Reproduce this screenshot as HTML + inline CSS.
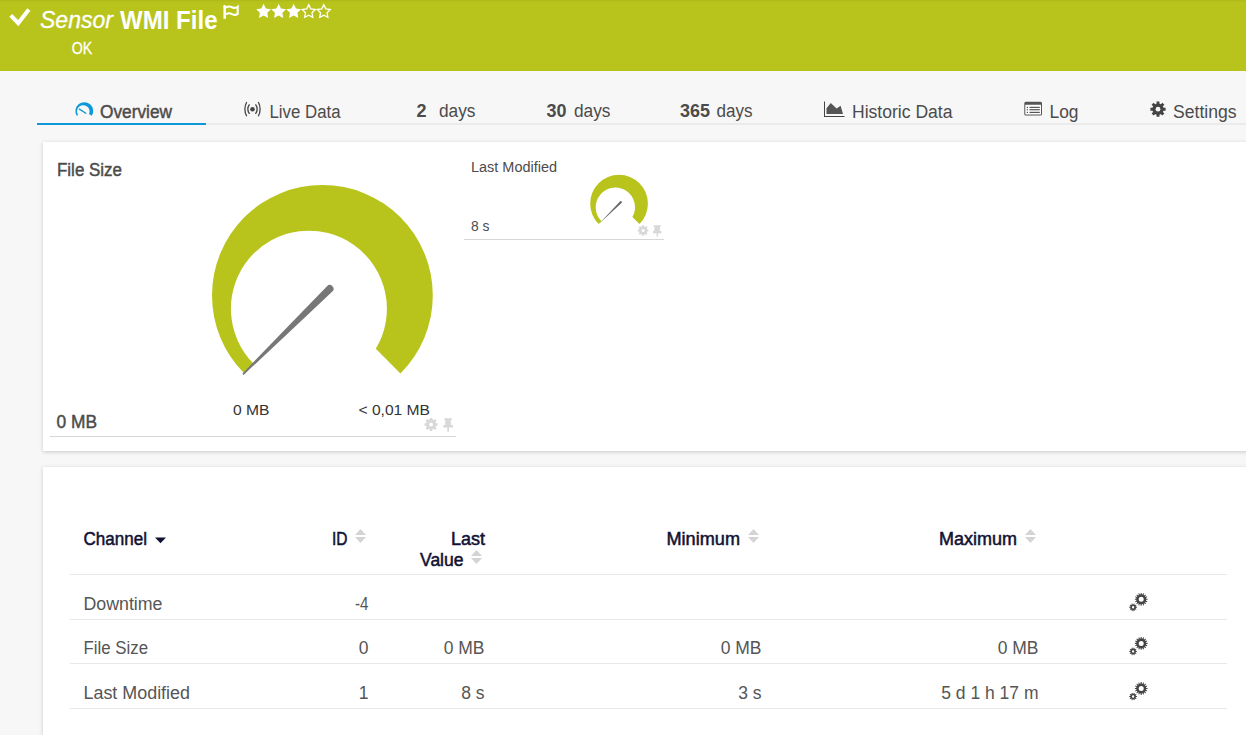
<!DOCTYPE html>
<html><head><meta charset="utf-8">
<style>
html,body{margin:0;padding:0;width:1246px;height:735px;overflow:hidden;background:#f7f7f7;font-family:"Liberation Sans",sans-serif;}
#hdr{position:absolute;left:0;top:0;width:1246px;height:71px;background:#b8c41b;}
.panel{position:absolute;left:43px;width:1260px;background:#fff;box-shadow:0 1px 4px rgba(0,0,0,0.19);}
#p1{top:142px;height:309px;}
#p2{top:467px;height:320px;}
svg{position:absolute;left:0;top:0;}
text{font-family:"Liberation Sans",sans-serif;}
</style></head>
<body>
<div id="hdr"></div>
<div class="panel" id="p1"></div>
<div class="panel" id="p2"></div>
<svg width="1246" height="735" viewBox="0 0 1246 735">
<rect x="0" y="0" width="1246" height="1" fill="#000" fill-opacity=".045"/><rect x="0" y="1" width="1246" height="1" fill="#000" fill-opacity=".018"/>
<path d="M10.8 15.3 L18.2 23.2 L28.85 9.5" fill="none" stroke="#fff" stroke-width="4"/>
<text x="40" y="28.2" font-size="24.5" font-style="italic" fill="#fff" textLength="73" lengthAdjust="spacingAndGlyphs" stroke="#fff" stroke-width="0.3">Sensor</text>
<text x="120" y="28.6" font-size="26" font-weight="bold" fill="#fff" textLength="97.5" lengthAdjust="spacingAndGlyphs">WMI File</text>
<path d="M224.7 6.5 V18.8" stroke="#fff" stroke-width="2.5" fill="none"/><circle cx="224.7" cy="6.4" r="1.4" fill="#fff"/>
<path d="M226 7.6 C228 6.2 230 6.2 232 7.2 S236 8.2 237.7 6.8 V13.9 C236 15.2 234 15.1 232 14.1 S228 12.9 226 14.3" fill="none" stroke="#fff" stroke-width="2.1"/>
<path d="M263.6 3.8 L265.89 8.44 L271.02 9.19 L267.31 12.81 L268.18 17.91 L263.6 15.5 L259.02 17.91 L259.89 12.81 L256.18 9.19 L261.31 8.44Z" fill="#fff"/>
<path d="M278.65 3.8 L280.94 8.44 L286.07 9.19 L282.36 12.81 L283.23 17.91 L278.65 15.5 L274.07 17.91 L274.94 12.81 L271.23 9.19 L276.36 8.44Z" fill="#fff"/>
<path d="M293.7 3.8 L295.99 8.44 L301.12 9.19 L297.41 12.81 L298.28 17.91 L293.7 15.5 L289.12 17.91 L289.99 12.81 L286.28 9.19 L291.41 8.44Z" fill="#fff"/>
<path d="M308.75 4.8 L310.78 8.91 L315.31 9.57 L312.03 12.77 L312.81 17.28 L308.75 15.15 L304.69 17.28 L305.47 12.77 L302.19 9.57 L306.72 8.91Z" fill="none" stroke="#fff" stroke-width="1.3" stroke-linejoin="miter" stroke-miterlimit="10"/>
<path d="M323.8 4.8 L325.83 8.91 L330.36 9.57 L327.08 12.77 L327.86 17.28 L323.8 15.15 L319.74 17.28 L320.52 12.77 L317.24 9.57 L321.77 8.91Z" fill="none" stroke="#fff" stroke-width="1.3" stroke-linejoin="miter" stroke-miterlimit="10"/>
<text x="71.8" y="54" font-size="16.2" fill="#fff" textLength="20.5" lengthAdjust="spacingAndGlyphs" stroke="#fff" stroke-width="0.35">OK</text>
<rect x="37" y="123" width="169" height="2" fill="#0d98d8"/>
<rect x="206" y="123" width="1040" height="2" fill="#ebebeb"/>
<path d="M76.75 115.82 A8.9 8.9 0 1 1 91.85 115.82 L88.97 114.02 A6.25 6.25 0 1 0 78.15 114.94Z" fill="#0d98d8"/>
<path d="M79.4 109.1 L85.8 113.3" stroke="#0d98d8" stroke-width="1.35" stroke-linecap="round"/>
<text x="100" y="118" font-size="18" fill="#4b4b4b" textLength="72" lengthAdjust="spacingAndGlyphs" stroke="#4b4b4b" stroke-width="0.45">Overview</text>
<circle cx="252.5" cy="109.2" r="2.3" fill="#444"/>
<g fill="none" stroke="#444" stroke-width="1.3"><path d="M249.5 104.3 A8.3 8.3 0 0 0 249.5 113.9"/><path d="M255.5 104.3 A8.3 8.3 0 0 1 255.5 113.9"/><path d="M246.7 102 A15.7 15.7 0 0 0 246.7 116.3"/><path d="M258.3 102 A15.7 15.7 0 0 1 258.3 116.3"/></g>
<text x="269.5" y="118" font-size="18" fill="#4b4b4b" textLength="71" lengthAdjust="spacingAndGlyphs">Live Data</text>
<text x="416.5" y="117" font-size="18" font-weight="bold" fill="#4b4b4b">2</text>
<text x="439" y="117" font-size="18" fill="#4b4b4b" textLength="36.5" lengthAdjust="spacingAndGlyphs">days</text>
<text x="546.5" y="117" font-size="18" font-weight="bold" fill="#4b4b4b" textLength="20" lengthAdjust="spacingAndGlyphs">30</text>
<text x="574" y="117" font-size="18" fill="#4b4b4b" textLength="36.5" lengthAdjust="spacingAndGlyphs">days</text>
<text x="680" y="117" font-size="18" font-weight="bold" fill="#4b4b4b" textLength="30" lengthAdjust="spacingAndGlyphs">365</text>
<text x="716.5" y="117" font-size="18" fill="#4b4b4b" textLength="36" lengthAdjust="spacingAndGlyphs">days</text>
<path d="M824 101.5 V117 H844.5 V116 H825 V101.5Z" fill="#444"/>
<path d="M826.5 114 V108.2 L830.8 103 L836.6 108.6 L840.6 105.8 L843 114Z" fill="#555"/>
<text x="852" y="118" font-size="18" fill="#4b4b4b" textLength="100.5" lengthAdjust="spacingAndGlyphs">Historic Data</text>
<rect x="1025" y="104.5" width="16.3" height="10.3" fill="#fff"/>
<path fill="#555" fill-rule="evenodd" d="M1025.8 101.7 H1040.5 Q1042 101.7 1042 103.2 V114.1 Q1042 115.6 1040.5 115.6 H1025.8 Q1024.3 115.6 1024.3 114.1 V103.2 Q1024.3 101.7 1025.8 101.7Z M1025.3 104.7 V114.6 H1041 V104.7Z"/>
<g fill="#555"><rect x="1026.8" y="106.8" width="1.2" height="1.2"/><rect x="1026.8" y="109.1" width="1.2" height="1.2"/><rect x="1026.8" y="111.8" width="1.2" height="1.2"/><rect x="1029.5" y="106.8" width="10.3" height="1.2"/><rect x="1029.5" y="109.1" width="10.3" height="1.2"/><rect x="1029.5" y="111.8" width="10.3" height="1.2"/></g>
<text x="1049.5" y="118" font-size="18" fill="#4b4b4b" textLength="29" lengthAdjust="spacingAndGlyphs">Log</text>
<circle cx="1158" cy="109.2" r="5.7" fill="#444"/><path d="M1161.42 110.65 L1165.6 110.65 L1165.6 107.75 L1161.42 107.75ZM1159.39 112.64 L1162.35 115.6 L1164.4 113.55 L1161.44 110.59ZM1156.55 112.62 L1156.55 116.8 L1159.45 116.8 L1159.45 112.62ZM1154.56 110.59 L1151.6 113.55 L1153.65 115.6 L1156.61 112.64ZM1154.58 107.75 L1150.4 107.75 L1150.4 110.65 L1154.58 110.65ZM1156.61 105.76 L1153.65 102.8 L1151.6 104.85 L1154.56 107.81ZM1159.45 105.78 L1159.45 101.6 L1156.55 101.6 L1156.55 105.78ZM1161.44 107.81 L1164.4 104.85 L1162.35 102.8 L1159.39 105.76Z" fill="#444"/><circle cx="1158" cy="109.2" r="2.4" fill="#f7f7f7"/>
<text x="1173" y="118" font-size="18" fill="#4b4b4b" textLength="63.5" lengthAdjust="spacingAndGlyphs">Settings</text>
<text x="57" y="176" font-size="18" fill="#4b4b4b" textLength="65" lengthAdjust="spacingAndGlyphs" stroke="#4b4b4b" stroke-width="0.45">File Size</text>
<text x="56.5" y="428" font-size="18" fill="#4b4b4b" textLength="40.5" lengthAdjust="spacingAndGlyphs" stroke="#4b4b4b" stroke-width="0.45">0 MB</text>
<rect x="50" y="436" width="406" height="1" fill="#d6d6d6"/>
<path d="M244.34 373.46 A110.4 110.4 0 1 1 400.46 373.46 L375.8 348.8 A78 78 0 1 0 253.85 363.95Z" fill="#b8c41b"/>
<path d="M243.60 374.91 Q288.18 333.46 332.37 291.61 A3.8 3.8 0 0 0 327.03 286.19 Q284.52 329.74 242.40 373.69 Z" fill="#777"/>
<text x="233" y="414.7" font-size="15" fill="#333" textLength="36.5" lengthAdjust="spacingAndGlyphs">0 MB</text>
<text x="358.5" y="414.7" font-size="15" fill="#333" textLength="71.5" lengthAdjust="spacingAndGlyphs">&lt; 0,01 MB</text>
<circle cx="431.1" cy="424.5" r="5" fill="#d8d8d8"/><path d="M434.1 425.8 L437.7 425.8 L437.7 423.2 L434.1 423.2ZM432.3 427.54 L434.85 430.09 L436.69 428.25 L434.14 425.7ZM429.8 427.5 L429.8 431.1 L432.4 431.1 L432.4 427.5ZM428.06 425.7 L425.51 428.25 L427.35 430.09 L429.9 427.54ZM428.1 423.2 L424.5 423.2 L424.5 425.8 L428.1 425.8ZM429.9 421.46 L427.35 418.91 L425.51 420.75 L428.06 423.3ZM432.4 421.5 L432.4 417.9 L429.8 417.9 L429.8 421.5ZM434.14 423.3 L436.69 420.75 L434.85 418.91 L432.3 421.46Z" fill="#d8d8d8"/><circle cx="431.1" cy="424.5" r="1.9" fill="#fff"/>
<path fill="#d8d8d8" d="M444.4 418.3 H451.9 V419.9 H450.8 V425 H452.9 V427.6 H449 V431.7 H447.3 V427.6 H443.3 V425 H445.3 V419.9 H444.4Z"/>
<path d="M598.65 224.05 A28.85 28.85 0 1 1 639.45 224.05 L632.41 217.01 A19.65 19.65 0 1 0 601.51 221.19Z" fill="#b8c41b"/>
<path d="M599.3 223.6 L620.2 201.3 A1.1 1.1 0 0 1 621.8 202.7 Z" fill="#666"/>
<text x="471" y="172" font-size="14" fill="#4b4b4b" textLength="86" lengthAdjust="spacingAndGlyphs">Last Modified</text>
<text x="471" y="231" font-size="14" fill="#4b4b4b" textLength="18.5" lengthAdjust="spacingAndGlyphs">8 s</text>
<rect x="464" y="239" width="200" height="1" fill="#d6d6d6"/>
<circle cx="643.1" cy="230.5" r="4" fill="#d8d8d8"/><path d="M645.5 231.55 L648.4 231.55 L648.4 229.45 L645.5 229.45ZM644.05 232.94 L646.11 234.99 L647.59 233.51 L645.54 231.45ZM642.05 232.9 L642.05 235.8 L644.15 235.8 L644.15 232.9ZM640.66 231.45 L638.61 233.51 L640.09 234.99 L642.15 232.94ZM640.7 229.45 L637.8 229.45 L637.8 231.55 L640.7 231.55ZM642.15 228.06 L640.09 226.01 L638.61 227.49 L640.66 229.55ZM644.15 228.1 L644.15 225.2 L642.05 225.2 L642.05 228.1ZM645.54 229.55 L647.59 227.49 L646.11 226.01 L644.05 228.06Z" fill="#d8d8d8"/><circle cx="643.1" cy="230.5" r="1.5" fill="#fff"/>
<path fill="#d8d8d8" d="M653.4 225.2 H660.9 V226.6 H659.9 V231 H661.4 V233.2 H658 V236.4 H656.6 V233.2 H653 V231 H654.4 V226.6 H653.4Z"/>
<rect x="70" y="574" width="1157" height="1" fill="#e8e8e8"/>
<rect x="70" y="619" width="1157" height="1" fill="#e8e8e8"/>
<rect x="70" y="663" width="1157" height="1" fill="#e8e8e8"/>
<rect x="70" y="708" width="1157" height="1" fill="#e8e8e8"/>
<text x="83.5" y="545" font-size="17.5" fill="#111133" textLength="63.5" lengthAdjust="spacingAndGlyphs" stroke="#111133" stroke-width="0.5">Channel</text>
<text x="332" y="545" font-size="17.5" fill="#111133" textLength="15.5" lengthAdjust="spacingAndGlyphs" stroke="#111133" stroke-width="0.5">ID</text>
<text x="451" y="545" font-size="17.5" fill="#111133" textLength="34" lengthAdjust="spacingAndGlyphs" stroke="#111133" stroke-width="0.5">Last</text>
<text x="420" y="566" font-size="17.5" fill="#111133" textLength="43.5" lengthAdjust="spacingAndGlyphs" stroke="#111133" stroke-width="0.5">Value</text>
<text x="666.5" y="545" font-size="17.5" fill="#111133" textLength="73.5" lengthAdjust="spacingAndGlyphs" stroke="#111133" stroke-width="0.5">Minimum</text>
<text x="939" y="545" font-size="17.5" fill="#111133" textLength="78" lengthAdjust="spacingAndGlyphs" stroke="#111133" stroke-width="0.5">Maximum</text>
<path d="M155 537.5 H166 L160.5 543.2 Z" fill="#111133"/>
<g fill="#d4d4d6"><path d="M355 535 L360.5 529 L366 535 Z M355 537 L366 537 L360.5 543 Z"/><path d="M471 556 L476.5 550 L482 556 Z M471 558 L482 558 L476.5 564 Z"/><path d="M748 535 L753.5 529 L759 535 Z M748 537 L759 537 L753.5 543 Z"/><path d="M1025 535 L1030.5 529 L1036 535 Z M1025 537 L1036 537 L1030.5 543 Z"/></g>
<text x="83.5" y="609.5" font-size="17.5" fill="#555555" textLength="79" lengthAdjust="spacingAndGlyphs">Downtime</text>
<text x="368.5" y="609.5" font-size="17.5" fill="#555555" text-anchor="end" textLength="13.5" lengthAdjust="spacingAndGlyphs">-4</text>
<path fill="#444" fill-rule="evenodd" d="M1146.18 598.81 L1147.58 598.77 L1147.58 599.83 L1146.18 599.79 L1145.98 600.75 L1147.29 601.25 L1146.89 602.23 L1145.61 601.66 L1145.07 602.47 L1146.08 603.44 L1145.34 604.18 L1144.37 603.17 L1143.56 603.71 L1144.13 604.99 L1143.15 605.39 L1142.65 604.08 L1141.69 604.28 L1141.73 605.68 L1140.67 605.68 L1140.71 604.28 L1139.75 604.08 L1139.25 605.39 L1138.27 604.99 L1138.84 603.71 L1138.03 603.17 L1137.06 604.18 L1136.32 603.44 L1137.33 602.47 L1136.79 601.66 L1135.51 602.23 L1135.11 601.25 L1136.42 600.75 L1136.22 599.79 L1134.82 599.83 L1134.82 598.77 L1136.22 598.81 L1136.42 597.85 L1135.11 597.35 L1135.51 596.37 L1136.79 596.94 L1137.33 596.13 L1136.32 595.16 L1137.06 594.42 L1138.03 595.43 L1138.84 594.89 L1138.27 593.61 L1139.25 593.21 L1139.75 594.52 L1140.71 594.32 L1140.67 592.92 L1141.73 592.92 L1141.69 594.32 L1142.65 594.52 L1143.15 593.21 L1144.13 593.61 L1143.56 594.89 L1144.37 595.43 L1145.34 594.42 L1146.08 595.16 L1145.07 596.13 L1145.61 596.94 L1146.89 596.37 L1147.29 597.35 L1145.98 597.85Z M1143.7 599.3 A2.5 2.5 0 1 0 1138.7 599.3 A2.5 2.5 0 1 0 1143.7 599.3Z"/>
<path fill="#444" fill-rule="evenodd" d="M1135.96 606.85 L1136.97 606.79 L1136.97 607.81 L1135.96 607.75 L1135.68 608.62 L1136.53 609.16 L1135.93 609.99 L1135.15 609.35 L1134.42 609.88 L1134.78 610.82 L1133.81 611.14 L1133.55 610.16 L1132.65 610.16 L1132.39 611.14 L1131.42 610.82 L1131.78 609.88 L1131.05 609.35 L1130.27 609.99 L1129.67 609.16 L1130.52 608.62 L1130.24 607.75 L1129.23 607.81 L1129.23 606.79 L1130.24 606.85 L1130.52 605.98 L1129.67 605.44 L1130.27 604.61 L1131.05 605.25 L1131.78 604.72 L1131.42 603.78 L1132.39 603.46 L1132.65 604.44 L1133.55 604.44 L1133.81 603.46 L1134.78 603.78 L1134.42 604.72 L1135.15 605.25 L1135.93 604.61 L1136.53 605.44 L1135.68 605.98Z M1134.3 607.3 A1.2 1.2 0 1 0 1131.9 607.3 A1.2 1.2 0 1 0 1134.3 607.3Z"/>
<text x="83.5" y="654.3" font-size="17.5" fill="#555555" textLength="64.5" lengthAdjust="spacingAndGlyphs">File Size</text>
<text x="368.5" y="654.3" font-size="17.5" fill="#555555" text-anchor="end">0</text>
<text x="484.5" y="654.3" font-size="17.5" fill="#555555" text-anchor="end">0 MB</text>
<text x="761.5" y="654.3" font-size="17.5" fill="#555555" text-anchor="end">0 MB</text>
<text x="1038.5" y="654.3" font-size="17.5" fill="#555555" text-anchor="end">0 MB</text>
<path fill="#444" fill-rule="evenodd" d="M1146.18 642.91 L1147.58 642.87 L1147.58 643.93 L1146.18 643.89 L1145.98 644.85 L1147.29 645.35 L1146.89 646.33 L1145.61 645.76 L1145.07 646.57 L1146.08 647.54 L1145.34 648.28 L1144.37 647.27 L1143.56 647.81 L1144.13 649.09 L1143.15 649.49 L1142.65 648.18 L1141.69 648.38 L1141.73 649.78 L1140.67 649.78 L1140.71 648.38 L1139.75 648.18 L1139.25 649.49 L1138.27 649.09 L1138.84 647.81 L1138.03 647.27 L1137.06 648.28 L1136.32 647.54 L1137.33 646.57 L1136.79 645.76 L1135.51 646.33 L1135.11 645.35 L1136.42 644.85 L1136.22 643.89 L1134.82 643.93 L1134.82 642.87 L1136.22 642.91 L1136.42 641.95 L1135.11 641.45 L1135.51 640.47 L1136.79 641.04 L1137.33 640.23 L1136.32 639.26 L1137.06 638.52 L1138.03 639.53 L1138.84 638.99 L1138.27 637.71 L1139.25 637.31 L1139.75 638.62 L1140.71 638.42 L1140.67 637.02 L1141.73 637.02 L1141.69 638.42 L1142.65 638.62 L1143.15 637.31 L1144.13 637.71 L1143.56 638.99 L1144.37 639.53 L1145.34 638.52 L1146.08 639.26 L1145.07 640.23 L1145.61 641.04 L1146.89 640.47 L1147.29 641.45 L1145.98 641.95Z M1143.7 643.4 A2.5 2.5 0 1 0 1138.7 643.4 A2.5 2.5 0 1 0 1143.7 643.4Z"/>
<path fill="#444" fill-rule="evenodd" d="M1135.96 650.95 L1136.97 650.89 L1136.97 651.91 L1135.96 651.85 L1135.68 652.72 L1136.53 653.26 L1135.93 654.09 L1135.15 653.45 L1134.42 653.98 L1134.78 654.92 L1133.81 655.24 L1133.55 654.26 L1132.65 654.26 L1132.39 655.24 L1131.42 654.92 L1131.78 653.98 L1131.05 653.45 L1130.27 654.09 L1129.67 653.26 L1130.52 652.72 L1130.24 651.85 L1129.23 651.91 L1129.23 650.89 L1130.24 650.95 L1130.52 650.08 L1129.67 649.54 L1130.27 648.71 L1131.05 649.35 L1131.78 648.82 L1131.42 647.88 L1132.39 647.56 L1132.65 648.54 L1133.55 648.54 L1133.81 647.56 L1134.78 647.88 L1134.42 648.82 L1135.15 649.35 L1135.93 648.71 L1136.53 649.54 L1135.68 650.08Z M1134.3 651.4 A1.2 1.2 0 1 0 1131.9 651.4 A1.2 1.2 0 1 0 1134.3 651.4Z"/>
<text x="83.5" y="698.5" font-size="17.5" fill="#555555" textLength="106.5" lengthAdjust="spacingAndGlyphs">Last Modified</text>
<text x="368.5" y="698.5" font-size="17.5" fill="#555555" text-anchor="end">1</text>
<text x="484.5" y="698.5" font-size="17.5" fill="#555555" text-anchor="end">8 s</text>
<text x="761.5" y="698.5" font-size="17.5" fill="#555555" text-anchor="end">3 s</text>
<text x="1038.5" y="698.5" font-size="17.5" fill="#555555" text-anchor="end">5 d 1 h 17 m</text>
<path fill="#444" fill-rule="evenodd" d="M1146.18 688.01 L1147.58 687.97 L1147.58 689.03 L1146.18 688.99 L1145.98 689.95 L1147.29 690.45 L1146.89 691.43 L1145.61 690.86 L1145.07 691.67 L1146.08 692.64 L1145.34 693.38 L1144.37 692.37 L1143.56 692.91 L1144.13 694.19 L1143.15 694.59 L1142.65 693.28 L1141.69 693.48 L1141.73 694.88 L1140.67 694.88 L1140.71 693.48 L1139.75 693.28 L1139.25 694.59 L1138.27 694.19 L1138.84 692.91 L1138.03 692.37 L1137.06 693.38 L1136.32 692.64 L1137.33 691.67 L1136.79 690.86 L1135.51 691.43 L1135.11 690.45 L1136.42 689.95 L1136.22 688.99 L1134.82 689.03 L1134.82 687.97 L1136.22 688.01 L1136.42 687.05 L1135.11 686.55 L1135.51 685.57 L1136.79 686.14 L1137.33 685.33 L1136.32 684.36 L1137.06 683.62 L1138.03 684.63 L1138.84 684.09 L1138.27 682.81 L1139.25 682.41 L1139.75 683.72 L1140.71 683.52 L1140.67 682.12 L1141.73 682.12 L1141.69 683.52 L1142.65 683.72 L1143.15 682.41 L1144.13 682.81 L1143.56 684.09 L1144.37 684.63 L1145.34 683.62 L1146.08 684.36 L1145.07 685.33 L1145.61 686.14 L1146.89 685.57 L1147.29 686.55 L1145.98 687.05Z M1143.7 688.5 A2.5 2.5 0 1 0 1138.7 688.5 A2.5 2.5 0 1 0 1143.7 688.5Z"/>
<path fill="#444" fill-rule="evenodd" d="M1135.96 696.05 L1136.97 695.99 L1136.97 697.01 L1135.96 696.95 L1135.68 697.82 L1136.53 698.36 L1135.93 699.19 L1135.15 698.55 L1134.42 699.08 L1134.78 700.02 L1133.81 700.34 L1133.55 699.36 L1132.65 699.36 L1132.39 700.34 L1131.42 700.02 L1131.78 699.08 L1131.05 698.55 L1130.27 699.19 L1129.67 698.36 L1130.52 697.82 L1130.24 696.95 L1129.23 697.01 L1129.23 695.99 L1130.24 696.05 L1130.52 695.18 L1129.67 694.64 L1130.27 693.81 L1131.05 694.45 L1131.78 693.92 L1131.42 692.98 L1132.39 692.66 L1132.65 693.64 L1133.55 693.64 L1133.81 692.66 L1134.78 692.98 L1134.42 693.92 L1135.15 694.45 L1135.93 693.81 L1136.53 694.64 L1135.68 695.18Z M1134.3 696.5 A1.2 1.2 0 1 0 1131.9 696.5 A1.2 1.2 0 1 0 1134.3 696.5Z"/>
</svg>
</body></html>
